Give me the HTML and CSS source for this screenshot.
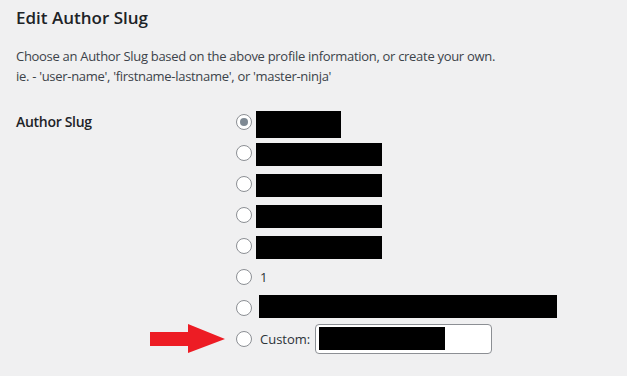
FILE: index.html
```html
<!DOCTYPE html>
<html lang="en">
<head>
<meta charset="utf-8">
<title>Edit Author Slug</title>
<link rel="stylesheet" href="styles.css">
</head>
<body>
<div class="wrap">
  <h2 class="title">Edit Author Slug</h2>
  <p class="desc">Choose an Author Slug based on the above profile information, or create your own.<br>ie. - 'user-name', 'firstname-lastname', or 'master-ninja'</p>
  <div class="form-row">
    <div class="label">Author Slug</div>
    <div class="options">
      <label class="opt"><span class="radio checked"></span><span class="redact tall" style="width:85px"></span></label>
      <label class="opt"><span class="radio"></span><span class="redact" style="width:126px"></span></label>
      <label class="opt"><span class="radio"></span><span class="redact" style="width:126px"></span></label>
      <label class="opt"><span class="radio"></span><span class="redact" style="width:126px"></span></label>
      <label class="opt"><span class="radio"></span><span class="redact" style="width:126px"></span></label>
      <label class="opt"><span class="radio"></span><span class="opt-text">1</span></label>
      <label class="opt"><span class="radio"></span><span class="redact shifted" style="width:298px"></span></label>
      <label class="opt custom">
        <span class="arrow" aria-hidden="true"><svg width="76" height="30" viewBox="0 0 76 30"><polygon points="0,8 38,8 38,0 75,15 38,29 38,22 0,22" fill="#ed1c24"/></svg></span>
        <span class="radio"></span><span class="opt-text">Custom:</span>
        <span class="input"><span class="redact in" style="width:126px"></span></span>
      </label>
    </div>
  </div>
</div>
</body>
</html>
```
FILE: styles.css
```css
html, body {
  margin: 0;
  padding: 0;
  background: #f0f0f1;
}
body {
  font-family: "Open Sans", "Noto Sans", sans-serif;
  font-size: 13px;
  color: #3c434a;
}
.wrap {
  padding: 0 16px;
}
.title {
  margin: 0;
  padding-top: 6px;
  font-size: 17px;
  line-height: 24px;
  font-weight: 600;
  color: #1d2327;
}
.desc {
  margin: 16px 0 0;
  line-height: 20px;
  letter-spacing: -0.3px;
}
.form-row {
  display: flex;
  margin-top: 20px;
}
.label {
  width: 220px;
  flex: none;
  font-size: 14px;
  font-weight: 600;
  color: #1d2327;
  line-height: 31px;
  letter-spacing: -0.3px;
}
.options {
  display: flex;
  flex-direction: column;
}
.opt {
  position: relative;
  display: flex;
  align-items: center;
  height: 31px;
}
.radio {
  box-sizing: border-box;
  width: 16px;
  height: 16px;
  border: 1px solid #8c8f94;
  border-radius: 50%;
  background: #fff;
  flex: none;
  display: flex;
  align-items: center;
  justify-content: center;
  margin-right: 4px;
}
.radio.checked::before {
  content: "";
  width: 8px;
  height: 8px;
  border-radius: 50%;
  background: #7e8993;
}
.redact {
  display: block;
  height: 23px;
  background: #000;
  margin-top: 4px;
}
.redact.tall {
  height: 27px;
  margin-top: 5px;
}
.redact.shifted {
  margin-left: 3px;
  margin-top: -3px;
}
.opt-text {
  margin-left: 4px;
  color: #2c3338;
  font-size: 13px;
}
.input {
  box-sizing: border-box;
  display: flex;
  align-items: center;
  width: 177px;
  height: 30px;
  margin-left: 5px;
  padding: 0 3px;
  border: 1px solid #8c8f94;
  border-radius: 4px;
  background: #fff;
}
.redact.in {
  margin-top: 0;
}
.arrow {
  position: absolute;
  left: -86px;
  top: 1px;
  display: block;
  line-height: 0;
}
```
